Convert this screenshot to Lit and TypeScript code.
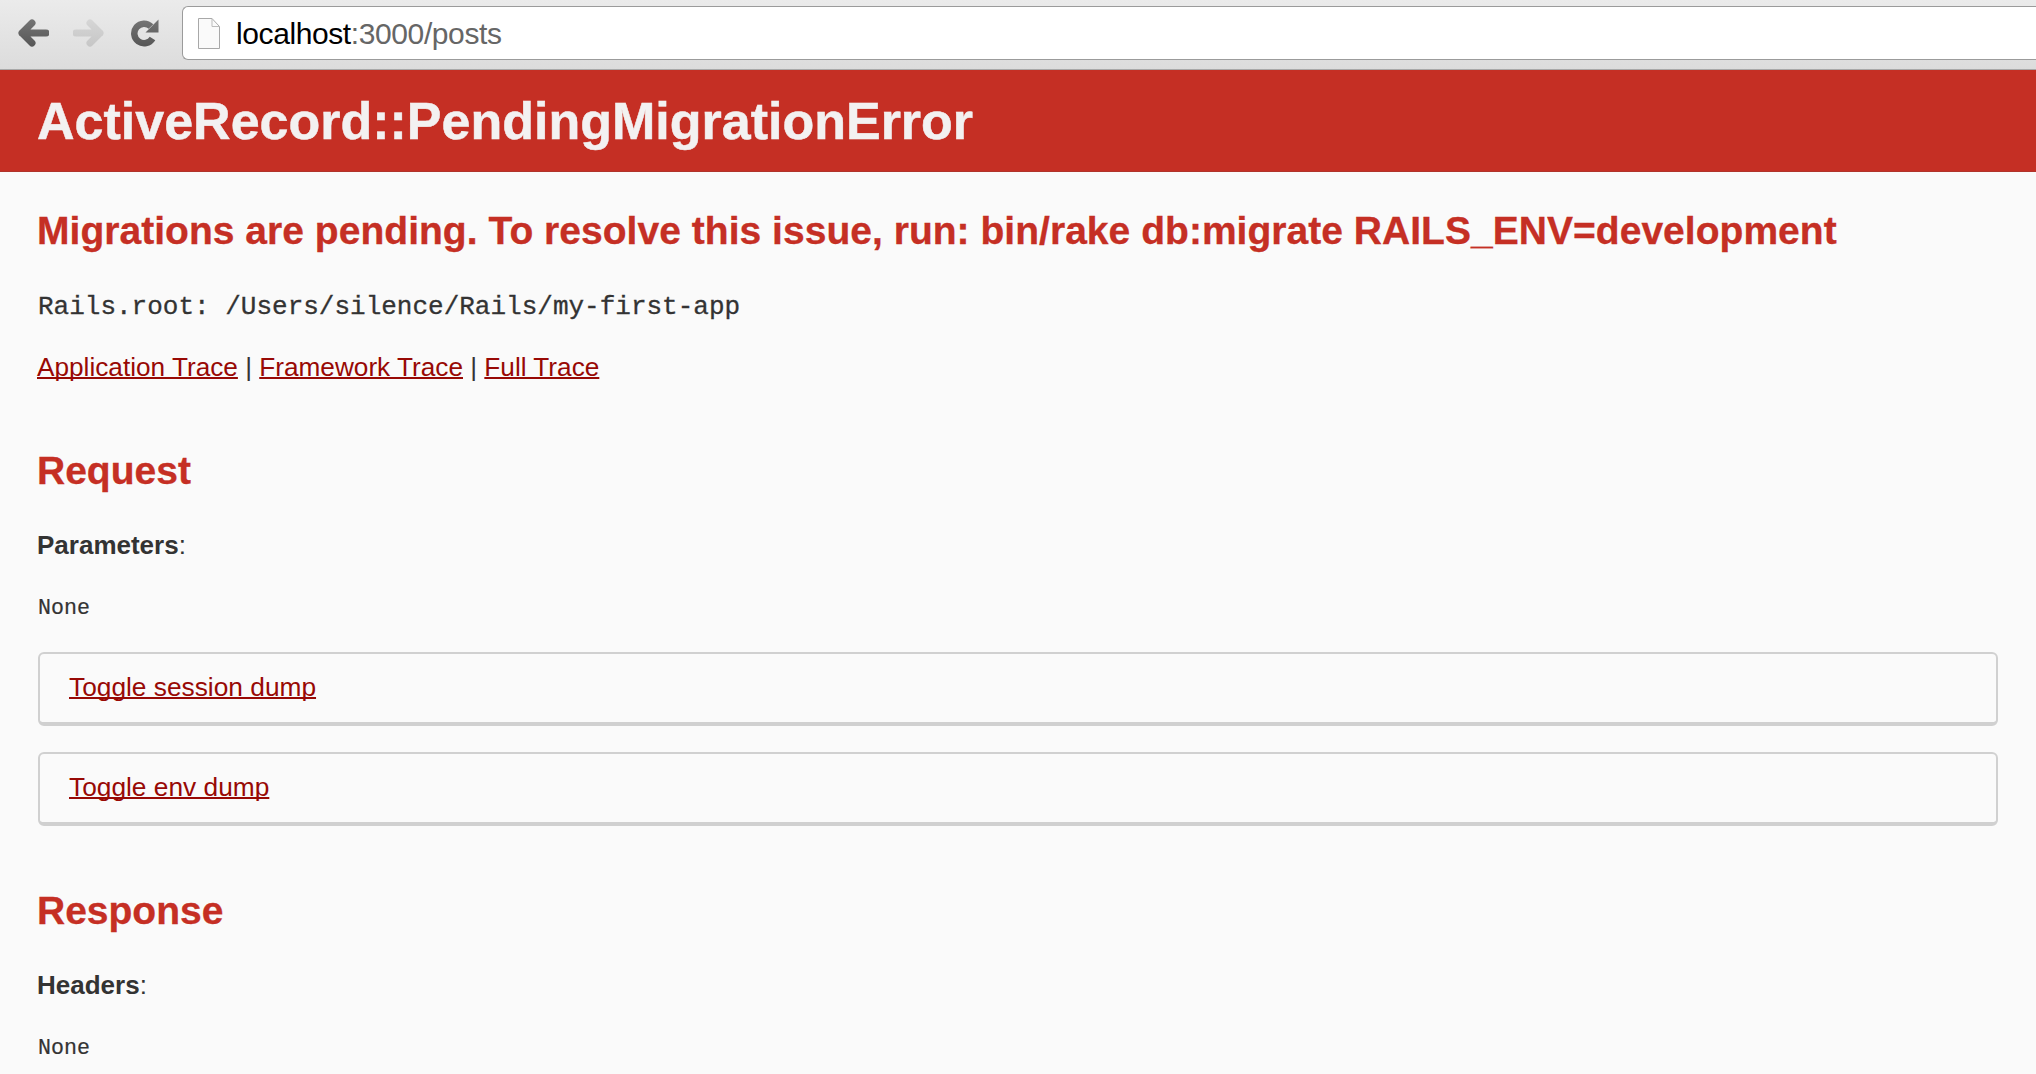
import { LitElement, html, css } from "lit";
import { customElement } from "lit/decorators.js";

@customElement("app-root")
export class AppRoot extends LitElement {
  static styles = css`
    :host {
      display: block;
      height: 1074px;
      overflow: hidden;
      background: #fafafa;
      font-family: "Liberation Sans", Arial, sans-serif;
      color: #333;
    }
    .toolbar {
      box-sizing: border-box;
      height: 70px;
      padding: 6px 0 9px 0;
      display: flex;
      align-items: stretch;
      background: linear-gradient(#ebebeb, #dcdcdc);
      border-bottom: 1px solid #a8a8a8;
    }
    .nav {
      width: 182px;
      flex: none;
      display: flex;
      align-items: center;
      padding-left: 18px;
      box-sizing: border-box;
    }
    .nav svg { display: block; flex: none; }
    .i-back { margin-right: 24px; }
    .i-fwd { margin-right: 27px; }
    .url {
      flex: 1;
      box-sizing: border-box;
      background: #fff;
      border: 1px solid #9b9b9b;
      border-right: none;
      border-radius: 6px 0 0 6px;
      display: flex;
      align-items: center;
      padding-left: 15px;
      font-size: 30px;
      letter-spacing: -0.4px;
      color: #666;
    }
    .url svg { margin-right: 16px; flex: none; }
    .url span { padding-top: 2px; }
    .url b { font-weight: 400; color: #000; }
    header {
      box-sizing: border-box;
      height: 102px;
      background: #c52f24;
      border-bottom: 1px solid #b0342b;
      display: flex;
      align-items: center;
      padding-left: 37px;
    }
    h1 {
      margin: 0;
      font-size: 52px;
      line-height: 60px;
      font-weight: 700;
      color: #f3f1f1;
      -webkit-text-stroke: 0.5px #f3f1f1;
    }
    main { padding: 0 38px 0 37px; }
    h2 {
      margin: 0;
      color: #c52f24;
      font-weight: 700;
      -webkit-text-stroke: 0.3px #c52f24;
    }
    .msg { font-size: 39px; line-height: 48px; padding-top: 35px; letter-spacing: 0.03px; }
    .root {
      font-family: "Liberation Mono", monospace;
      font-size: 26px;
      line-height: 32px;
      margin-top: 36px;
      padding-left: 1px;
      color: #333;
      -webkit-text-stroke: 0.3px #333;
    }
    .traces {
      font-size: 26.2px;
      line-height: 32px;
      margin-top: 28px;
    }
    a {
      color: #980905;
      text-decoration: underline;
      text-decoration-thickness: 2px;
      text-underline-offset: 1px;
      text-decoration-skip-ink: none;
    }
    .sec { font-size: 39px; line-height: 46px; }
    .s1 { margin-top: 65px; }
    .s2 { margin-top: 62px; }
    .label {
      font-size: 26px;
      line-height: 32px;
      margin-top: 35px;
    }
    .label strong { font-weight: 700; }
    .none {
      font-family: "Liberation Mono", monospace;
      font-size: 21.6px;
      line-height: 28px;
      margin-top: 33px;
      padding-left: 1px;
      -webkit-text-stroke: 0.2px #333;
    }
    .box {
      box-sizing: border-box;
      height: 74px;
      margin: 30px 0 0 1px;
      border: 2px solid #d0d0d0;
      border-bottom-width: 4px;
      border-radius: 6px;
      padding: 0 0 1px 29px;
      display: flex;
      align-items: center;
      font-size: 26.3px;
    }
    .box + .box { margin-top: 26px; }
  `;

  render() {
    return html`
      <div class="toolbar">
        <div class="nav">
          <svg class="i-back" width="31" height="28" viewBox="0 0 31 28">
            <defs>
              <linearGradient id="g" gradientUnits="userSpaceOnUse" x1="0" y1="0" x2="0" y2="28">
                <stop offset="0" stop-color="#757575"/><stop offset="1" stop-color="#565656"/>
              </linearGradient>
              <linearGradient id="h" gradientUnits="userSpaceOnUse" x1="0" y1="0" x2="0" y2="28">
                <stop offset="0" stop-color="#d6d6d6"/><stop offset="1" stop-color="#c6c6c6"/>
              </linearGradient>
            </defs>
            <path d="M4 14H28M14 4L4 14L14 24" fill="none" stroke="url(#g)" stroke-width="7" stroke-linecap="round" stroke-linejoin="round"/>
          </svg>
          <svg class="i-fwd" width="31" height="28" viewBox="0 0 31 28">
            <path d="M3 14H27M17 4L27 14L17 24" fill="none" stroke="url(#h)" stroke-width="7" stroke-linecap="round" stroke-linejoin="round"/>
          </svg>
          <svg width="28" height="28" viewBox="0 0 28 28">
            <path d="M21.5 19.5A9.8 9.8 0 1 1 20 7.5" fill="none" stroke="url(#g)" stroke-width="6.5"/>
            <path d="M27.5 0.5V13.5H14.5Z" fill="url(#g)"/>
          </svg>
        </div>
        <div class="url">
          <svg width="22" height="31" viewBox="0 0 22 31">
            <path d="M.5.5H14L21.5 8.5V30.5H.5Z" fill="#fafafa" stroke="#a8a8a8"/>
            <path d="M14 .5V8.5H21.5" fill="none" stroke="#bbb"/>
          </svg>
          <span><b>localhost</b>:3000/posts</span>
        </div>
      </div>
      <header><h1>ActiveRecord::PendingMigrationError</h1></header>
      <main>
        <h2 class="msg">Migrations are pending. To resolve this issue, run: bin/rake db:migrate RAILS_ENV=development</h2>
        <div class="root">Rails.root: /Users/silence/Rails/my-first-app</div>
        <div class="traces">
          <a href="#">Application Trace</a> | <a href="#">Framework Trace</a> | <a href="#">Full Trace</a>
        </div>
        <h2 class="sec s1">Request</h2>
        <div class="label"><strong>Parameters</strong>:</div>
        <div class="none">None</div>
        <div class="box"><a href="#">Toggle session dump</a></div>
        <div class="box"><a href="#">Toggle env dump</a></div>
        <h2 class="sec s2">Response</h2>
        <div class="label"><strong>Headers</strong>:</div>
        <div class="none">None</div>
      </main>
    `;
  }
}
